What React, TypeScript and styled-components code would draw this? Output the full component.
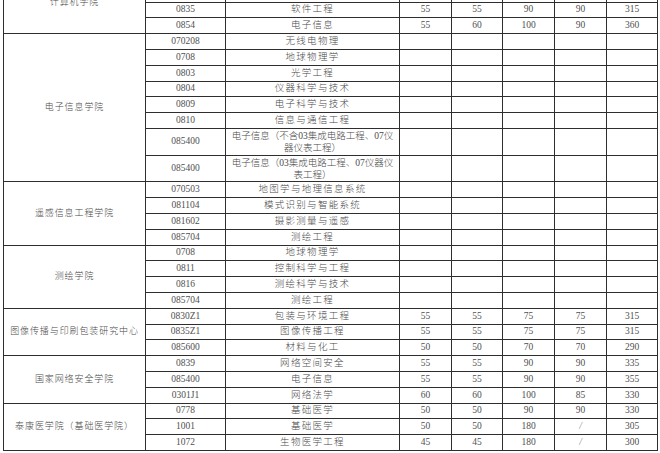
import React from 'react';
import styled, { createGlobalStyle } from 'styled-components';

const GlobalStyle = createGlobalStyle`
  html, body {
    margin: 0;
    padding: 0;
    background: #fff;
    overflow: hidden;
  }
`;

type Row = {
  code: string;
  name: React.ReactNode;
  scores?: string[];
  tall?: boolean;
};

type Group = {
  dept: string;
  rows: Row[];
};

const groups: Group[] = [
  {
    dept: '计算机学院',
    rows: [
      { code: '0812', name: '计算机科学与技术', scores: ['55', '55', '90', '90', '335'] },
      { code: '0775', name: '计算机科学与技术', scores: ['55', '55', '90', '90', '335'] },
      { code: '0835', name: '软件工程', scores: ['55', '55', '90', '90', '315'] },
      { code: '0854', name: '电子信息', scores: ['55', '60', '100', '90', '360'] },
    ],
  },
  {
    dept: '电子信息学院',
    rows: [
      { code: '070208', name: '无线电物理' },
      { code: '0708', name: '地球物理学' },
      { code: '0803', name: '光学工程' },
      { code: '0804', name: '仪器科学与技术' },
      { code: '0809', name: '电子科学与技术' },
      { code: '0810', name: '信息与通信工程' },
      {
        code: '085400',
        tall: true,
        name: (
          <>
            电子信息（不含03集成电路工程、07仪
            <br />
            器仪表工程）
          </>
        ),
      },
      {
        code: '085400',
        tall: true,
        name: (
          <>
            电子信息（03集成电路工程、07仪器仪
            <br />
            表工程）
          </>
        ),
      },
    ],
  },
  {
    dept: '遥感信息工程学院',
    rows: [
      { code: '070503', name: '地图学与地理信息系统' },
      { code: '081104', name: '模式识别与智能系统' },
      { code: '081602', name: '摄影测量与遥感' },
      { code: '085704', name: '测绘工程' },
    ],
  },
  {
    dept: '测绘学院',
    rows: [
      { code: '0708', name: '地球物理学' },
      { code: '0811', name: '控制科学与工程' },
      { code: '0816', name: '测绘科学与技术' },
      { code: '085704', name: '测绘工程' },
    ],
  },
  {
    dept: '图像传播与印刷包装研究中心',
    rows: [
      { code: '0830Z1', name: '包装与环境工程', scores: ['55', '55', '75', '75', '315'] },
      { code: '0835Z1', name: '图像传播工程', scores: ['55', '55', '75', '75', '315'] },
      { code: '085600', name: '材料与化工', scores: ['50', '50', '70', '70', '290'] },
    ],
  },
  {
    dept: '国家网络安全学院',
    rows: [
      { code: '0839', name: '网络空间安全', scores: ['55', '55', '90', '90', '335'] },
      { code: '085400', name: '电子信息', scores: ['55', '55', '90', '90', '355'] },
      { code: '0301J1', name: '网络法学', scores: ['60', '60', '100', '85', '330'] },
    ],
  },
  {
    dept: '泰康医学院（基础医学院）',
    rows: [
      { code: '0778', name: '基础医学', scores: ['50', '50', '90', '90', '330'] },
      { code: '1001', name: '基础医学', scores: ['50', '50', '180', '/', '305'] },
      { code: '1072', name: '生物医学工程', scores: ['45', '45', '180', '/', '300'] },
    ],
  },
];

const colWidths = [142, 80, 174, 52, 51, 52, 52, 51];

const Page = styled.div`
  padding-left: 3px;
  margin-top: -30px;
`;

const Table = styled.table`
  border-collapse: collapse;
  table-layout: fixed;
  width: 654px;
  font-family: 'Liberation Serif', 'Noto Sans CJK SC', serif;
  font-size: 9.5px;
  color: #4a4a4a;
`;

const Tr = styled.tr<{ $tall?: boolean }>`
  height: ${(p) => (p.$tall ? '26.7px' : '15.8px')};
`;

const Cell = styled.td`
  border: 1px solid #2e2e2e;
  padding: 0;
  text-align: center;
  vertical-align: middle;
  white-space: nowrap;
  line-height: 11px;
`;

const DeptCell = styled(Cell)`
  font-size: 9px;
  letter-spacing: 0.9px;
  font-weight: 300;
`;

const CodeCell = styled(Cell)`
  color: #505050;
`;

const NameCell = styled(Cell)<{ $tall?: boolean }>`
  font-weight: 300;
  letter-spacing: ${(p) => (p.$tall ? '0' : '1.3px')};
  line-height: ${(p) => (p.$tall ? '12px' : '11px')};
`;

const ScoreCell = styled(Cell)<{ $slash?: boolean }>`
  color: ${(p) => (p.$slash ? '#8a8a8a' : '#505050')};
  font-style: ${(p) => (p.$slash ? 'italic' : 'normal')};
`;

export default function App() {
  return (
    <>
      <GlobalStyle />
      <Page>
        <Table>
          <colgroup>
            {colWidths.map((w, i) => (
              <col key={i} style={{ width: w }} />
            ))}
          </colgroup>
          <tbody>
            {groups.map((g) =>
              g.rows.map((r, i) => (
                <Tr key={g.dept + i} $tall={r.tall}>
                  {i === 0 && <DeptCell rowSpan={g.rows.length}>{g.dept}</DeptCell>}
                  <CodeCell>{r.code}</CodeCell>
                  <NameCell $tall={r.tall}>{r.name}</NameCell>
                  {Array.from({ length: 5 }).map((_, k) => {
                    const v = r.scores ? r.scores[k] : '';
                    return (
                      <ScoreCell key={k} $slash={v === '/'}>
                        {v}
                      </ScoreCell>
                    );
                  })}
                </Tr>
              )),
            )}
          </tbody>
        </Table>
      </Page>
    </>
  );
}
